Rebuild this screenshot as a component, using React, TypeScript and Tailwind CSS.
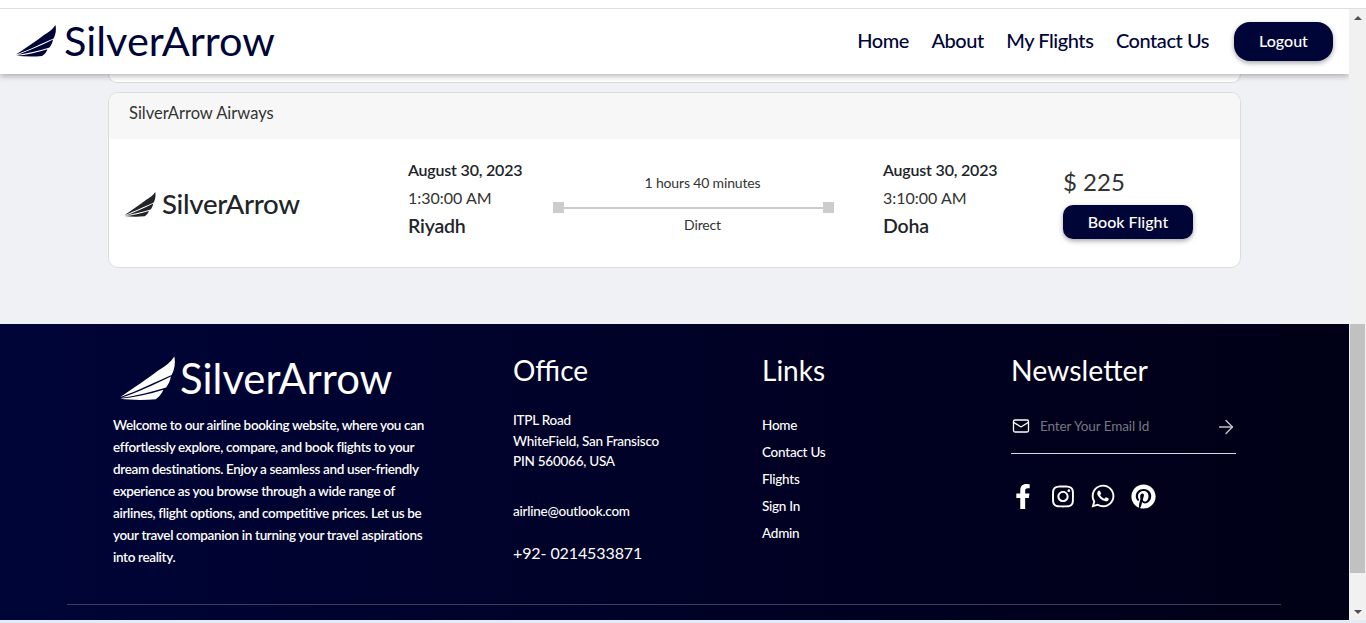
import React from 'react';
import { ArrowRight, Mail } from 'lucide-react';
import { FaFacebookF, FaInstagram, FaPinterest, FaWhatsapp } from 'react-icons/fa';

const navLinks = ['Home', 'About', 'My Flights', 'Contact Us'];
const footerLinks = ['Home', 'Contact Us', 'Flights', 'Sign In', 'Admin'];

const Wing = ({ className }: { className: string }) => (
  <svg viewBox="0 0 40 32" fill="currentColor" className={className}>
    <path d="M0 29.6C10 23 20 16 28 10C33 7 37 4 39.5 0C40.5 5 39.5 10 37.5 13.5C27 18 13 25 0 29.6Z" />
    <path d="M1 30C12 26.5 25 20.5 37 14.6C36.5 18 35 20.5 33.5 22.5C24 25.5 12 28.5 1 30Z" />
    <path d="M0 30.8C10 30 21 27.5 31.5 24.2C30.5 27 28.5 29.5 26 31C17 32 8 31.6 0 30.8Z" />
  </svg>
);

const FlightPoint = ({ time, city }: { time: string; city: string }) => (
  <div className="flex flex-col text-[#212529]">
    <span className="text-[16px] leading-[28px] font-semibold tracking-[-0.2px]">August 30, 2023</span>
    <span className="text-[16px] leading-[28px] text-[#333]">{time}</span>
    <span className="text-[19.5px] leading-[28px] font-semibold tracking-[-0.2px]">{city}</span>
  </div>
);

export default function App() {
  return (
    <div className="w-[1366px] h-[623px] overflow-hidden flex flex-col bg-white font-['Lato',sans-serif]">
      <div className="h-[9px] shrink-0 bg-white border-b border-[#dedede]" />

      <div className="flex h-[611px] shrink-0">
        <div className="w-[1349px] flex flex-col overflow-hidden bg-[#f0f1f5]">
          {/* Navbar */}
          <header className="relative z-10 h-[65px] shrink-0 flex items-center justify-between bg-white pl-4 pr-4 shadow-[0_2px_6px_rgba(0,0,0,0.3)]">
            <div className="flex items-center gap-2 text-[#000537] pb-[2px]">
              <Wing className="w-[40px] h-[32px]" />
              <span className="text-[41.5px] leading-none">SilverArrow</span>
            </div>
            <nav className="flex items-center text-[#000537]">
              <div className="flex items-center gap-[22.5px] pb-[3px] text-[20px] font-medium tracking-[-0.45px]">
                {navLinks.map((link) => (
                  <a key={link}>{link}</a>
                ))}
              </div>
              <button className="ml-[25px] w-[99px] h-[39px] pb-[2px] rounded-[16px] bg-[#000537] text-white text-[16px] font-medium shadow-[0_2px_5px_rgba(0,0,0,0.35)]">
                Logout
              </button>
            </nav>
          </header>

          {/* Results */}
          <main className="h-[250px] shrink-0 px-[108px]">
            <div className="h-[9px] w-[1133px] bg-white border border-t-0 border-[#dcdcdc] rounded-b-[10px]" />
            <div className="mt-[9px] w-[1133px] h-[176px] rounded-[10px] border border-[#dcdcdc] bg-white overflow-hidden">
              <div className="h-[46px] flex items-center pl-5 pb-[6px] bg-[#f7f7f7] text-[16.5px] text-[#333]">
                SilverArrow Airways
              </div>
              <div className="grid grid-cols-[284px_145px_281px_49px_180px_130px] pl-[15px] pt-[17px]">
                <div className="flex items-center gap-[6px] h-[62px] mt-[17px] text-[#212529]">
                  <Wing className="w-[32px] h-[25px]" />
                  <span className="text-[27.6px] leading-none font-medium tracking-[-0.3px]">SilverArrow</span>
                </div>
                <FlightPoint time="1:30:00 AM" city="Riyadh" />
                <div className="flex flex-col pt-[17px] text-[14px] tracking-[-0.15px] text-[#333]">
                  <span className="leading-[20px] text-center pl-[18px]">1 hours 40 minutes</span>
                  <div className="w-full flex items-center mt-[9px]">
                    <div className="w-[11px] h-[11px] bg-[#cccccc]" />
                    <div className="flex-1 h-[2px] bg-[#cccccc]" />
                    <div className="w-[11px] h-[11px] bg-[#cccccc]" />
                  </div>
                  <span className="leading-[20px] mt-[2px] text-center pl-[18px]">Direct</span>
                </div>
                <div />
                <FlightPoint time="3:10:00 AM" city="Doha" />
                <div className="flex flex-col items-start">
                  <span className="text-[24px] leading-[30px] mt-[11px] text-[#333]">$ 225</span>
                  <button className="mt-[8px] w-[130px] h-[34px] rounded-[10px] bg-[#000537] text-white text-[16px] font-medium shadow-[0_2px_5px_rgba(0,0,0,0.35)]">
                    Book Flight
                  </button>
                </div>
              </div>
            </div>
          </main>

          {/* Footer */}
          <footer className="h-[296px] shrink-0 bg-gradient-to-r from-[#000538] to-[#000016] text-white">
            <div className="h-[280px] grid grid-cols-[400px_249px_249px_225px] pl-[113px]">
              <div>
                <div className="flex items-center gap-[5px] pl-[7px] pt-[31px]">
                  <Wing className="w-[55px] h-[45px]" />
                  <span className="text-[41.8px] leading-[46px]">SilverArrow</span>
                </div>
                <p className="mt-[13px] w-[320px] text-[13.5px] leading-[22px] font-semibold tracking-[-0.35px]">
                  Welcome to our airline booking website, where you can effortlessly explore, compare, and book flights to your dream destinations. Enjoy a seamless and user-friendly experience as you browse through a wide range of airlines, flight options, and competitive prices. Let us be your travel companion in turning your travel aspirations into reality.
                </p>
              </div>

              <div>
                <h4 className="pt-[27px] text-[28px] leading-[38px]">Office</h4>
                <p className="mt-[21px] text-[13.5px] leading-[20.5px] font-medium tracking-[-0.25px]">
                  ITPL Road
                  <br />
                  WhiteField, San Fransisco
                  <br />
                  PIN 560066, USA
                </p>
                <p className="mt-[29px] text-[13.5px] leading-[20px] font-medium tracking-[-0.25px]">airline@outlook.com</p>
                <p className="mt-[21px] text-[16px] leading-[22px] tracking-[-0.1px]">+92- 0214533871</p>
              </div>

              <div>
                <h4 className="pt-[27px] text-[28px] leading-[38px]">Links</h4>
                <ul className="mt-[26px] flex flex-col gap-[7px] text-[13.5px] leading-[20px] font-medium tracking-[-0.25px]">
                  {footerLinks.map((link) => (
                    <li key={link}>{link}</li>
                  ))}
                </ul>
              </div>

              <div>
                <h4 className="pt-[27px] text-[28.4px] leading-[38px]">Newsletter</h4>
                <div className="mt-[20px] h-[45px] pb-[9px] flex items-center border-b border-[#d8d8e0]">
                  <Mail className="w-[18px] h-[18px] ml-[1px] -mt-[2px]" strokeWidth={1.75} />
                  <span className="ml-[10px] flex-1 text-[13.5px] text-[#77777f] tracking-[-0.1px]">Enter Your Email Id</span>
                  <ArrowRight className="w-[22px] h-[22px] -mr-[1px] text-[#c4c4cc]" strokeWidth={1.5} />
                </div>
                <div className="mt-[29px] flex items-center">
                  <span className="w-[24px] flex justify-center"><FaFacebookF className="w-[20px] h-[25px]" /></span>
                  <span className="ml-[16px] w-[24px] flex justify-center"><FaInstagram className="w-[25px] h-[25px]" /></span>
                  <span className="ml-[16px] w-[24px] flex justify-center"><FaWhatsapp className="w-[26px] h-[26px] shrink-0" /></span>
                  <span className="ml-[16px] w-[24px] flex justify-center"><FaPinterest className="w-[25px] h-[25px] shrink-0" /></span>
                </div>
              </div>
            </div>
            <div className="ml-[67px] w-[1214px] h-px bg-[#3c3f5c]" />
          </footer>
        </div>

        {/* Scrollbar */}
        <div className="w-[17px] shrink-0 flex flex-col items-center bg-[#f1f1f1]">
          <div className="h-[17px] shrink-0 flex items-center justify-center">
            <div className="w-0 h-0 border-x-[4px] border-x-transparent border-b-[4px] border-b-[#505050]" />
          </div>
          <div className="flex-1 w-full flex flex-col justify-end pb-[30px]">
            <div className="w-[15px] h-[249px] mx-auto bg-[#c1c1c1]" />
          </div>
          <div className="h-[17px] shrink-0 flex items-center justify-center">
            <div className="w-0 h-0 border-x-[4px] border-x-transparent border-t-[4px] border-t-[#505050]" />
          </div>
        </div>
      </div>

      <div className="flex-1 bg-[#e3ecf5]" />
    </div>
  );
}
